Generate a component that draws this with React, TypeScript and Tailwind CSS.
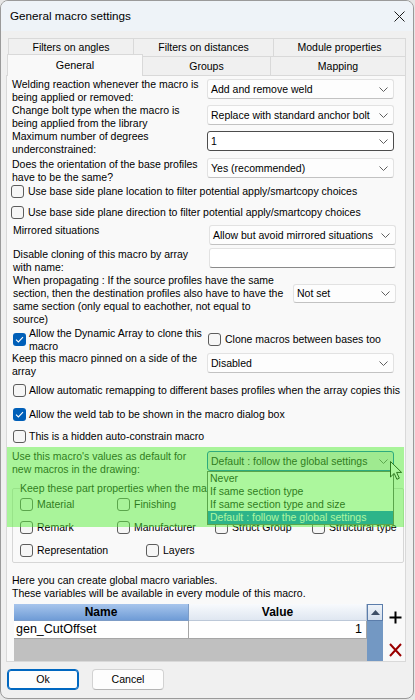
import React from "react";

function Chevron() {
  return (
    <svg width="9" height="5" viewBox="0 0 9 5" className="shrink-0">
      <path d="M0.5 0.5L4.5 4.5L8.5 0.5" fill="none" stroke="#5f5f5f" strokeWidth="1" />
    </svg>
  );
}

function Combo({
  value,
  className = "",
  variant = "plain",
}: {
  value: string;
  className?: string;
  variant?: "plain" | "edit" | "open";
}) {
  const look =
    variant === "edit"
      ? "border-[#4c4c4c] bg-white"
      : variant === "open"
      ? "border-[#0067c0] bg-[#e4e4e4]"
      : "border-[#e2e2e2] border-b-[#c2c2c2] bg-[#fdfdfd]";
  return (
    <div
      className={`flex shrink-0 items-center justify-between rounded-[3px] border pl-[3px] pr-[5px] text-[10.5px] leading-none text-black ${look} ${className}`}
    >
      <span className="whitespace-nowrap">{value}</span>
      <Chevron />
    </div>
  );
}

function Check({ checked = false }: { checked?: boolean }) {
  if (checked) {
    return (
      <span className="flex h-[13px] w-[13px] shrink-0 items-center justify-center rounded-[3px] bg-[#005fb8]">
        <svg width="9" height="7" viewBox="0 0 9 7">
          <path d="M1 3.6L3.4 6L8 1.2" fill="none" stroke="#ffffff" strokeWidth="1.1" />
        </svg>
      </span>
    );
  }
  return <span className="h-[13px] w-[13px] shrink-0 rounded-[3px] border border-[#5c5c5c] bg-[#f6f6f6]" />;
}

function Opt({ label, className = "" }: { label: string; className?: string }) {
  return (
    <div className={`flex items-center ${className}`}>
      <Check />
      <span className="ml-[4px] whitespace-nowrap">{label}</span>
    </div>
  );
}

function TitleBar() {
  return (
    <div className="flex h-[30px] shrink-0 items-center justify-between bg-[#eef3f8] pl-[9px] pr-[8px]">
      <span className="text-[11.7px] text-black">General macro settings</span>
      <svg width="11" height="11" viewBox="0 0 11 11">
        <path d="M0.5 0.5L10.5 10.5M10.5 0.5L0.5 10.5" stroke="#1a1a1a" strokeWidth="1" />
      </svg>
    </div>
  );
}

function Tabs() {
  const tab = "flex items-center justify-center border border-[#d9d9d9] bg-[#f0f0f0] text-[10.5px] text-black";
  return (
    <div className="mt-[7px] flex shrink-0 flex-col">
      <div className="flex h-[18px] pl-[7px]">
        <div className={`${tab} w-[126px] border-b-0`}>Filters on angles</div>
        <div className={`${tab} -ml-[1px] w-[141px] border-b-0`}>Filters on distances</div>
        <div className={`${tab} -ml-[1px] w-[133px] border-b-0`}>Module properties</div>
      </div>
      <div className="flex h-[19px] items-end pl-[6px]">
        <div className="relative z-10 -mb-[1px] flex h-[22px] w-[136px] items-center justify-center border border-b-0 border-[#d9d9d9] bg-[#f9f9f9] pb-[1px] text-[10.8px]">
          General
        </div>
        <div className={`${tab} -ml-[1px] h-[19px] w-[129px] border-b-0 pt-[1px]`}>Groups</div>
        <div className={`${tab} -ml-[1px] h-[19px] w-[136px] border-b-0 pt-[1px]`}>Mapping</div>
      </div>
    </div>
  );
}

function Panel() {
  return (
    <div className="ml-[5px] flex h-[587px] w-[400px] shrink-0 flex-col border border-[#d9d9d9] bg-[#f9f9f9] pl-[5px] text-[10.5px] leading-[13px]">
      <div className="mt-[2px] flex h-[26px]">
        <div className="w-[195px] whitespace-nowrap">
          Welding reaction whenever the macro is
          <br />
          being applied or removed:
        </div>
        <Combo value="Add and remove weld" className="mt-[1px] h-[20px] w-[187px]" />
      </div>
      <div className="flex h-[26px]">
        <div className="w-[195px] whitespace-nowrap">
          Change bolt type when the macro is
          <br />
          being applied from the library
        </div>
        <Combo value="Replace with standard anchor bolt" className="mt-[1px] h-[20px] w-[187px]" />
      </div>
      <div className="flex h-[27px]">
        <div className="w-[195px] whitespace-nowrap">
          Maximum number of degrees
          <br />
          underconstrained:
        </div>
        <Combo value="1" variant="edit" className="mt-[1px] h-[20px] w-[187px]" />
      </div>
      <div className="flex h-[25px] overflow-hidden">
        <div className="mt-[1px] w-[195px] whitespace-nowrap">
          Does the orientation of the base profiles
          <br />
          have to be the same?
        </div>
        <Combo value="Yes (recommended)" className="mt-[1px] h-[20px] w-[187px]" />
      </div>

      <div className="-ml-[1px] flex h-[18px] items-center pt-[1px]">
        <Check />
        <span className="ml-[4px] whitespace-nowrap">Use base side plane location to filter potential apply/smartcopy choices</span>
      </div>
      <div className="-ml-[1px] flex h-[24px] items-center">
        <Check />
        <span className="ml-[4px] whitespace-nowrap">Use base side plane direction to filter potential apply/smartcopy choices</span>
      </div>

      <div className="flex h-[23px]">
        <div className="w-[197px] whitespace-nowrap pl-[1px]">Mirrored situations</div>
        <Combo value="Allow but avoid mirrored situations" className="mt-[1px] h-[20px] w-[187px]" />
      </div>
      <div className="flex h-[27px]">
        <div className="mt-[1px] w-[197px] whitespace-nowrap pl-[1px]">
          Disable cloning of this macro by array
          <br />
          with name:
        </div>
        <div className="mt-[1px] h-[20px] w-[187px] rounded-[3px] border border-[#e2e2e2] border-b-[#8a8a8a] bg-white" />
      </div>
      <div className="flex h-[53px]">
        <div className="w-[281px] whitespace-nowrap pl-[1px]">
          When propagating : If the source profiles have the same
          <br />
          section, then the destination profiles also have to have the
          <br />
          same section (only equal to eachother, not equal to
          <br />
          source)
        </div>
        <Combo value="Not set" className="mt-[10px] h-[19px] w-[103px]" />
      </div>

      <div className="flex h-[25px]">
        <div className="flex w-[196px] items-start">
          <span className="ml-[1px] mt-[6px]">
            <Check checked />
          </span>
          <span className="ml-[3px] whitespace-nowrap">
            Allow the Dynamic Array to clone this
            <br />
            macro
          </span>
        </div>
        <div className="flex items-center">
          <Check />
          <span className="ml-[4px] whitespace-nowrap">Clone macros between bases too</span>
        </div>
      </div>
      <div className="flex h-[27px]">
        <div className="w-[195px] whitespace-nowrap">
          Keep this macro pinned on a side of the
          <br />
          array
        </div>
        <Combo value="Disabled" className="mt-[1px] h-[20px] w-[187px]" />
      </div>

      <div className="flex h-[22px] items-center pl-[1px]">
        <Check />
        <span className="ml-[3px] whitespace-nowrap">
          Allow automatic remapping to different bases profiles when the array copies this
        </span>
      </div>
      <div className="flex h-[27px] items-center pl-[1px]">
        <Check checked />
        <span className="ml-[3px] whitespace-nowrap">Allow the weld tab to be shown in the macro dialog box</span>
      </div>
      <div className="flex h-[17px] items-center pl-[1px]">
        <Check />
        <span className="ml-[3px] whitespace-nowrap">This is a hidden auto-constrain macro</span>
      </div>

      <div className="flex h-[37px]">
        <div className="mt-[5px] w-[195px] whitespace-nowrap">
          Use this macro's values as default for
          <br />
          new macros in the drawing:
        </div>
        <Combo value="Default : follow the global settings" variant="open" className="mt-[6px] h-[20px] w-[187px]" />
      </div>

      <fieldset className="w-[392px] shrink-0 rounded-[2px] border border-[#d6d6d6] pb-[2px]">
        <legend className="ml-[7px] whitespace-nowrap leading-[13px]">Keep these part properties when the ma</legend>
        <div className="flex h-[19px] items-center pl-[7px]">
          <Opt label="Material" className="w-[97px]" />
          <Opt label="Finishing" className="w-[98px]" />
        </div>
        <div className="flex h-[27px] items-center pl-[7px]">
          <Opt label="Remark" className="w-[97px]" />
          <Opt label="Manufacturer" className="w-[98px]" />
          <Opt label="Struct Group" className="w-[97px]" />
          <Opt label="Structural type" />
        </div>
        <div className="flex h-[19px] items-center pl-[7px]">
          <Opt label="Representation" className="w-[126px]" />
          <Opt label="Layers" />
        </div>
      </fieldset>

      <div className="mt-[11px] whitespace-nowrap">
        Here you can create global macro variables.
        <br />
        These variables will be available in every module of this macro.
      </div>

      <div className="ml-[2px] mt-[4px] flex flex-1">
        <div className="flex w-[353px] flex-col bg-[#c0c0c0]">
          <div className="flex h-[17px] text-[12px] font-bold leading-none">
            <div className="flex w-[175px] items-center justify-center border-b border-r border-[#7d9cc6] bg-gradient-to-b from-[#a7c5ec] to-[#6f9cd6]">
              Name
            </div>
            <div className="flex flex-1 items-center justify-center border-b border-r border-[#bcc8d8] bg-gradient-to-b from-[#f8fafd] to-[#dfe7f1]">
              Value
            </div>
          </div>
          <div className="flex h-[18px] text-[12.5px] leading-none">
            <div className="flex w-[175px] items-center border-b border-r border-[#a6a6a6] bg-white pl-[2px]">
              gen_CutOffset
            </div>
            <div className="flex flex-1 items-center justify-end border-b border-r border-[#a6a6a6] bg-white pr-[4px]">1</div>
          </div>
        </div>
        <div className="w-[16px] bg-[#7398c3]">
          <div className="flex h-[17px] items-center justify-center border border-[#5b7dab] bg-gradient-to-b from-[#eef3f9] to-[#d3deec]">
            <svg width="9" height="5" viewBox="0 0 9 5">
              <path d="M0 5L4.5 0L9 5Z" fill="#3d4e66" />
            </svg>
          </div>
        </div>
        <div className="ml-[6px] flex w-[13px] flex-col">
          <svg width="13" height="13" viewBox="0 0 13 13" className="mt-[7px]">
            <path d="M6.5 0.5V12.5M0.5 6.5H12.5" stroke="#000000" strokeWidth="2" />
          </svg>
          <svg width="13" height="14" viewBox="0 0 13 14" className="mt-[19px]">
            <path d="M1 1L12 13M12 1L1 13" stroke="#9a0000" strokeWidth="2" />
          </svg>
        </div>
      </div>
    </div>
  );
}

function Buttons() {
  return (
    <div className="mt-[7px] flex gap-[13px] pl-[6px] text-[10.6px]">
      <button className="h-[21px] w-[72px] rounded-[4px] border border-[#0067c0] bg-[#fdfdfd] shadow-[inset_0_0_0_1px_#0067c0]">
        Ok
      </button>
      <button className="h-[21px] w-[72px] rounded-[4px] border border-[#d2d2d2] border-b-[#b5b5b5] bg-[#fdfdfd]">
        Cancel
      </button>
    </div>
  );
}

function OpenList() {
  const items = ["Never", "If same section type", "If same section type and size"];
  return (
    <div className="absolute left-[206px] top-[470px] z-20 w-[187px] border border-[#5a5a5a] bg-white text-[10.5px] leading-[13px]">
      {items.map((t) => (
        <div key={t} className="h-[13px] whitespace-nowrap pl-[2px]">
          {t}
        </div>
      ))}
      <div className="h-[13px] whitespace-nowrap bg-[#0078d7] pl-[2px] text-white">Default : follow the global settings</div>
    </div>
  );
}

function Pointer() {
  return (
    <svg width="13" height="19" viewBox="0 0 13 19" className="absolute left-[389px] top-[460px] z-30">
      <path d="M0.5 0.5V16L4.2 12.4L6.9 18.3L9.3 17.2L6.6 11.4H11.6Z" fill="#ffffff" stroke="#000000" strokeWidth="1" strokeLinejoin="round" />
    </svg>
  );
}

export default function App() {
  return (
    <div className="h-[700px] w-[415px] bg-[#e6e6e6] font-['Liberation_Sans',Arial,sans-serif] text-black">
      <div className="relative flex h-[699px] w-[414px] flex-col overflow-hidden rounded-[8px] border border-[#9a9a9a] bg-[#f0f0f0]">
        <TitleBar />
        <Tabs />
        <Panel />
        <Buttons />
        <OpenList />
        <Pointer />
        <div className="pointer-events-none absolute left-[6px] top-[446px] z-40 h-[80px] w-[397px] bg-[rgba(90,240,60,0.5)]" />
      </div>
    </div>
  );
}
